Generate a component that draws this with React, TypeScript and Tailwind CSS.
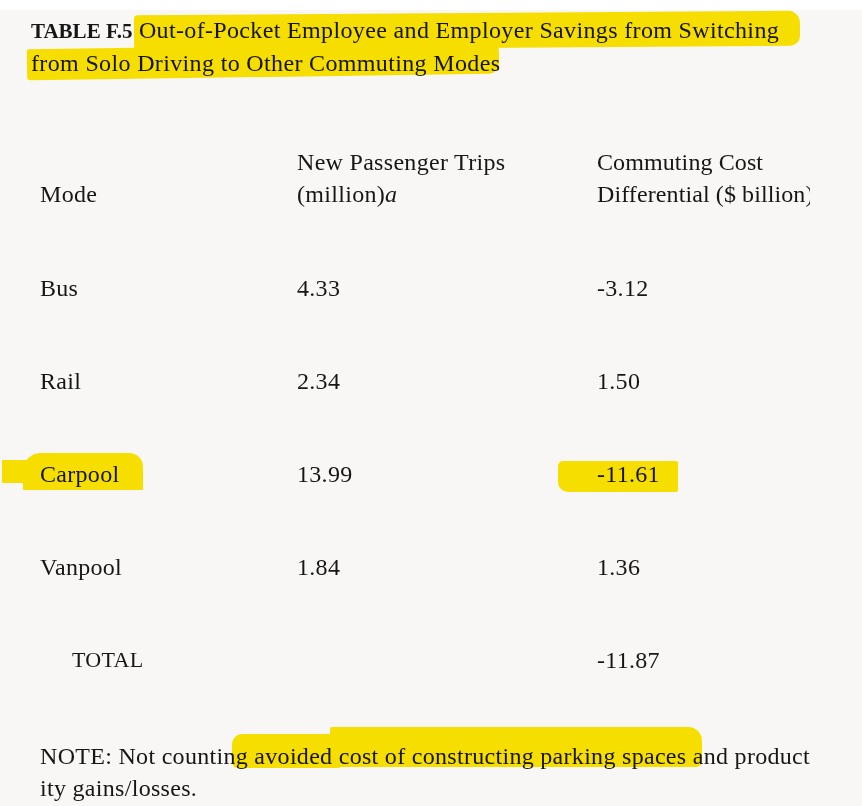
import React from 'react';

interface Row {
  mode: string;
  trips: string;
  cost: string;
  indent?: boolean;
}

const rows: Row[] = [
  { mode: 'Bus', trips: '4.33', cost: '-3.12' },
  { mode: 'Rail', trips: '2.34', cost: '1.50' },
  { mode: 'Carpool', trips: '13.99', cost: '-11.61' },
  { mode: 'Vanpool', trips: '1.84', cost: '1.36' },
  { mode: 'TOTAL', trips: '', cost: '-11.87', indent: true },
];

const App: React.FC = () => {
  return (
    <div className="relative w-[862px] h-[806px] overflow-hidden bg-white font-['Liberation_Serif',serif] text-[#161616]">
      {/* white strip above the page */}
      <div className="h-[10px] bg-white"></div>

      <div className="h-[796px] bg-[#f8f7f5] pl-[31px]">
        <div className="w-[779px] overflow-hidden">
          {/* Caption */}
          <p className="pt-[4px] text-[24px] leading-[32px] tracking-[0.35px]">
            <span className="font-bold text-[21px] tracking-normal">TABLE F.5</span> Out-of-Pocket Employee and Employer Savings from Switching
            from Solo Driving to Other Commuting Modes
          </p>

          {/* Table */}
          <div className="mt-[36px] text-[24px] leading-[32px] tracking-[0.3px]">
            <div className="grid grid-cols-[257px_300px_1fr] items-end py-[31px]">
              <div className="pl-[9px]">Mode</div>
              <div className="pl-[9px] whitespace-nowrap">
                <div>New Passenger Trips</div>
                <div>
                  (million)<span className="italic">a</span>
                </div>
              </div>
              <div className="pl-[9px] whitespace-nowrap tracking-[0.1px]">
                <div>Commuting Cost</div>
                <div>Differential ($ billion)</div>
              </div>
            </div>

            {rows.map((r) => (
              <div key={r.mode} className="grid grid-cols-[257px_300px_1fr] items-center h-[93px]">
                <div className={r.indent ? 'pl-[41px] text-[22px]' : 'pl-[9px]'}>{r.mode}</div>
                <div className="pl-[9px]">{r.trips}</div>
                <div className="pl-[9px]">{r.cost}</div>
              </div>
            ))}
          </div>

          {/* Note */}
          <div className="mt-[34px] pl-[9px] text-[24px] leading-[32px] tracking-[0.3px] whitespace-nowrap">
            <div>NOTE: Not counting avoided cost of constructing parking spaces and productiv</div>
            <div>ity gains/losses.</div>
          </div>
        </div>
      </div>

      {/* Marker highlights */}
      <div className="pointer-events-none absolute inset-0 mix-blend-multiply">
        <div className="absolute left-[134px] top-[13px] w-[666px] h-[35px] bg-[#fde600] rounded-[4px_12px_10px_2px] -rotate-[0.4deg]"></div>
        <div className="absolute left-[27px] top-[46px] w-[472px] h-[31px] bg-[#fde600] rounded-[2px_8px_10px_3px] -rotate-[0.8deg]"></div>

        <div className="absolute left-[2px] top-[460px] w-[30px] h-[23px] bg-[#fde600]"></div>
        <div className="absolute left-[23px] top-[453px] w-[120px] h-[37px] bg-[#fde600] rounded-[18px_14px_0_0]"></div>

        <div className="absolute left-[558px] top-[461px] w-[120px] h-[31px] bg-[#fde600] rounded-[5px_2px_2px_10px]"></div>

        <div className="absolute left-[232px] top-[734px] w-[110px] h-[34px] bg-[#fde600] rounded-[10px_0_4px_6px]"></div>
        <div className="absolute left-[330px] top-[727px] w-[372px] h-[40px] bg-[#fde600] rounded-[2px_14px_6px_8px]"></div>
      </div>
    </div>
  );
};

export default App;
